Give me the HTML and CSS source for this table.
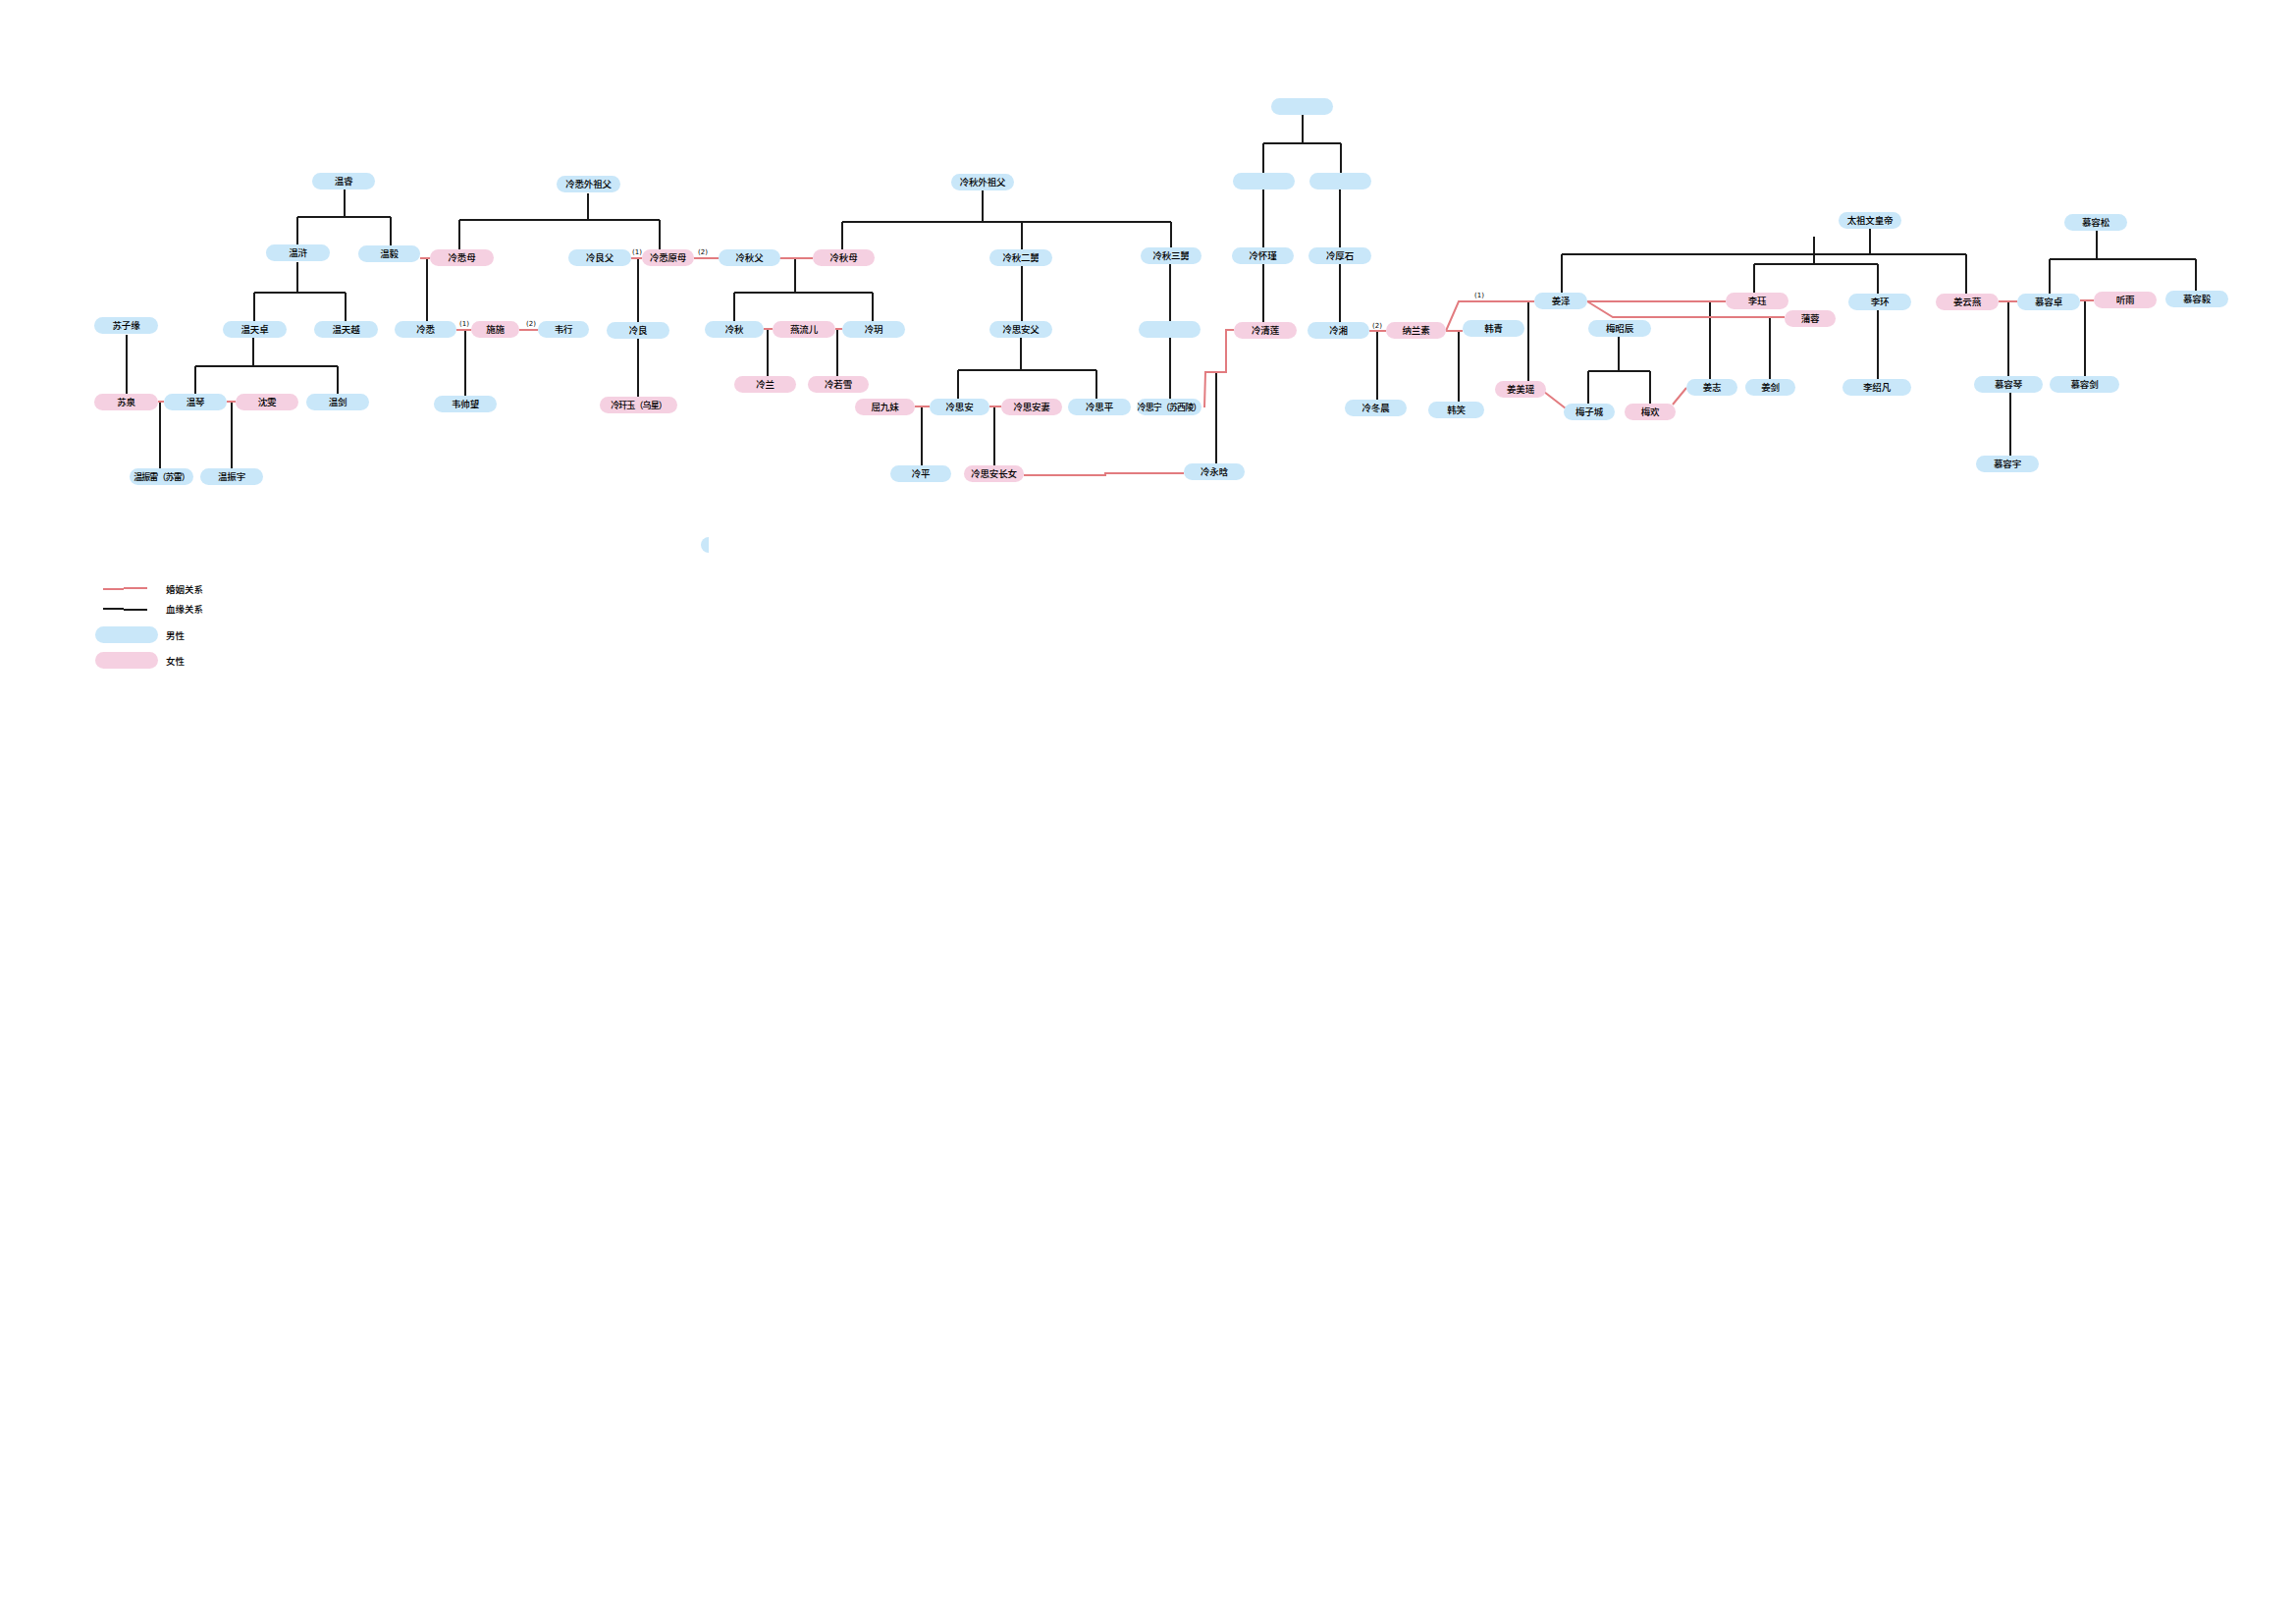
FILE: index.html
```html
<!DOCTYPE html>
<html lang="zh">
<head>
<meta charset="utf-8">
<title>人物关系图</title>
<link rel="stylesheet" href="styles.css">
</head>
<body>
<div class="canvas">
<svg class="links" width="2339" height="1653" viewBox="0 0 2339 1653">
<g class="blood">
<path d="M351 193V221M303 221H398M303 221V249M398 221V250"/>
<path d="M303 267V298M259 298H352M259 298V327M352 298V327"/>
<path d="M258 343V373M199 373H344M199 373V402M344 373V401"/>
<path d="M129 341V402M163 409V477M236 409V477M435 263V327"/>
<path d="M599 197V224M468 224H672M468 224V254M672 224V254"/>
<path d="M650 263V328M650 345V404M474 336V403"/>
<path d="M810 263V298M748 298H889M748 298V327M889 298V327"/>
<path d="M1001 194V226M858 226H1193M858 226V254M1041 226V254M1193 226V252"/>
<path d="M782 335V383M853 335V383M1041 271V327"/>
<path d="M1040 343V377M976 377H1117M976 377V406M1117 377V406"/>
<path d="M939 414V474M1013 414V474M1192 269V327M1192 343V406M1239 379V472"/>
<path d="M1327 117V146M1287 146H1366M1287 146V176M1366 146V176"/>
<path d="M1287 193V252M1287 268V328M1365 193V252M1365 268V328"/>
<path d="M1403 337V407M1557 307V388M1486 337V409"/>
<path d="M1649 343V378M1618 378H1681M1618 378V411M1681 378V411"/>
<path d="M1742 307V386M1803 323V386"/>
<path d="M1591 259H2003M1591 259V298M2003 259V299M1787 269H1913M1787 269V298M1913 269V299M1848 241V269M1905 233V259"/>
<path d="M1913 316V386M2046 307V383M2124 306V383"/>
<path d="M2136 234V264M2088 264H2237M2088 264V299M2237 264V296M2048 400V464"/>
<path d="M105 620H126M126 621H150"/>
</g>
<g class="marriage">
<path d="M161 409H167M231 409H240M428 263H438"/>
<path d="M643 263H654M707 263H732M465 336H480M529 336H548"/>
<path d="M794 263H828M778 335H787M851 335H858"/>
<path d="M932 414H947M1008 414H1020"/>
<path d="M1043 484H1126V482H1206"/>
<path d="M1227 415L1228 379H1249V336H1257"/>
<path d="M1395 337H1412M1473 337L1486 307H1563M1473 337H1490"/>
<path d="M1573 399L1595 416M1704 412L1718 395"/>
<path d="M1617 307H1758M1617 307L1643 323H1818"/>
<path d="M2036 307H2055M2119 306H2133"/>
<path d="M105 600H126M126 599H150"/>
</g>
<g class="tag">
<text x="649" y="259">(1)</text>
<text x="716" y="259">(2)</text>
<text x="473" y="332">(1)</text>
<text x="541" y="332">(2)</text>
<text x="1403" y="334">(2)</text>
<text x="1507" y="303">(1)</text>
</g>
</svg>

<div class="node m" style="left:318px;top:176px;width:64px">温睿</div>
<div class="node m" style="left:271px;top:249px;width:65px">温浒</div>
<div class="node m" style="left:365px;top:250px;width:63px">温毅</div>
<div class="node f" style="left:438px;top:254px;width:65px">冷悉母</div>
<div class="node m" style="left:227px;top:327px;width:65px">温天卓</div>
<div class="node m" style="left:320px;top:327px;width:65px">温天越</div>
<div class="node m" style="left:96px;top:323px;width:65px">苏子缘</div>
<div class="node m" style="left:402px;top:327px;width:63px">冷悉</div>
<div class="node f" style="left:96px;top:401px;width:65px">苏泉</div>
<div class="node m" style="left:167px;top:401px;width:64px">温琴</div>
<div class="node f" style="left:240px;top:401px;width:64px">沈雯</div>
<div class="node m" style="left:312px;top:401px;width:64px">温剑</div>
<div class="node m tight" style="left:132px;top:477px;width:65px">温振雷（苏雷）</div>
<div class="node m" style="left:204px;top:477px;width:64px">温振宇</div>

<div class="node m" style="left:567px;top:179px;width:65px">冷悉外祖父</div>
<div class="node m" style="left:579px;top:254px;width:64px">冷良父</div>
<div class="node f" style="left:654px;top:254px;width:53px">冷悉原母</div>
<div class="node m" style="left:732px;top:254px;width:63px">冷秋父</div>
<div class="node f" style="left:480px;top:327px;width:49px">施施</div>
<div class="node m" style="left:548px;top:327px;width:52px">韦行</div>
<div class="node m" style="left:442px;top:403px;width:64px">韦帅望</div>
<div class="node m" style="left:618px;top:328px;width:64px">冷良</div>
<div class="node f tight" style="left:611px;top:404px;width:79px">冷玕玉（乌星）</div>
<div class="node m" style="left:718px;top:327px;width:60px">冷秋</div>

<div class="node m" style="left:969px;top:177px;width:64px">冷秋外祖父</div>
<div class="node f" style="left:828px;top:254px;width:63px">冷秋母</div>
<div class="node f" style="left:787px;top:327px;width:64px">燕流儿</div>
<div class="node m" style="left:858px;top:327px;width:64px">冷玥</div>
<div class="node m" style="left:1008px;top:254px;width:64px">冷秋二舅</div>
<div class="node m" style="left:1008px;top:327px;width:64px">冷思安父</div>
<div class="node f" style="left:748px;top:383px;width:63px">冷兰</div>
<div class="node f" style="left:823px;top:383px;width:62px">冷若雪</div>
<div class="node f" style="left:871px;top:406px;width:61px">屈九妹</div>
<div class="node m" style="left:947px;top:406px;width:61px">冷思安</div>
<div class="node f" style="left:1020px;top:406px;width:62px">冷思安妻</div>
<div class="node m" style="left:907px;top:474px;width:62px">冷平</div>
<div class="node f" style="left:982px;top:474px;width:61px">冷思安长女</div>

<div class="node m" style="left:1162px;top:252px;width:62px">冷秋三舅</div>
<div class="node m" style="left:1088px;top:406px;width:64px">冷思平</div>
<div class="node m" style="left:1160px;top:327px;width:63px"></div>
<div class="node m tight" style="left:1158px;top:406px;width:66px">冷思宁（苏西陵）</div>
<div class="node m" style="left:1206px;top:472px;width:62px">冷永晗</div>

<div class="node m" style="left:1295px;top:100px;width:63px"></div>
<div class="node m" style="left:1256px;top:176px;width:63px"></div>
<div class="node m" style="left:1334px;top:176px;width:63px"></div>
<div class="node m" style="left:1255px;top:252px;width:63px">冷怀瑾</div>
<div class="node m" style="left:1333px;top:252px;width:64px">冷厚石</div>
<div class="node f" style="left:1257px;top:328px;width:64px">冷清莲</div>
<div class="node m" style="left:1332px;top:328px;width:63px">冷湘</div>
<div class="node f" style="left:1412px;top:328px;width:61px">纳兰素</div>
<div class="node m" style="left:1370px;top:407px;width:63px">冷冬晨</div>

<div class="node m" style="left:1490px;top:326px;width:63px">韩青</div>
<div class="node m" style="left:1455px;top:409px;width:57px">韩笑</div>
<div class="node f" style="left:1523px;top:388px;width:52px">姜美瑶</div>
<div class="node m" style="left:1563px;top:298px;width:54px">姜泽</div>
<div class="node m" style="left:1618px;top:326px;width:64px">梅昭辰</div>
<div class="node m" style="left:1593px;top:411px;width:52px">梅子城</div>
<div class="node f" style="left:1655px;top:411px;width:52px">梅欢</div>
<div class="node m" style="left:1718px;top:386px;width:52px">姜志</div>
<div class="node m" style="left:1778px;top:386px;width:51px">姜剑</div>
<div class="node f" style="left:1758px;top:298px;width:64px">李珏</div>
<div class="node f" style="left:1818px;top:316px;width:52px">蒲蓉</div>

<div class="node m" style="left:1873px;top:216px;width:64px">太祖文皇帝</div>
<div class="node m" style="left:1883px;top:299px;width:64px">李环</div>
<div class="node m" style="left:1877px;top:386px;width:70px">李绍凡</div>
<div class="node f" style="left:1972px;top:299px;width:64px">姜云燕</div>
<div class="node m" style="left:2055px;top:299px;width:64px">慕容卓</div>
<div class="node f" style="left:2133px;top:297px;width:64px">听雨</div>
<div class="node m" style="left:2206px;top:296px;width:64px">慕容毅</div>
<div class="node m" style="left:2103px;top:218px;width:64px">慕容松</div>
<div class="node m" style="left:2011px;top:383px;width:70px">慕容琴</div>
<div class="node m" style="left:2088px;top:383px;width:71px">慕容剑</div>
<div class="node m" style="left:2013px;top:464px;width:64px">慕容宇</div>

<div class="sliver" style="left:714px;top:547px"></div>

<div class="legend">
  <div class="legend-row"><span class="legend-key"></span><span>婚姻关系</span></div>
  <div class="legend-row"><span class="legend-key"></span><span>血缘关系</span></div>
  <div class="legend-row pill-row"><span class="legend-pill m"></span><span>男性</span></div>
  <div class="legend-row pill-row"><span class="legend-pill f"></span><span>女性</span></div>
</div>
</div>
</body>
</html>
```
FILE: styles.css
```css
html, body {
  margin: 0;
  padding: 0;
  background: #ffffff;
}
.canvas {
  position: relative;
  width: 2339px;
  height: 1653px;
  overflow: hidden;
  font-family: "Noto Sans CJK SC", "Noto Sans", sans-serif;
  color: #000;
}
.links {
  position: absolute;
  left: 0;
  top: 0;
}
.blood path {
  fill: none;
  stroke: #1a1a1a;
  stroke-width: 2;
}
.marriage path {
  fill: none;
  stroke: #e27b7f;
  stroke-width: 2;
}
.tag text {
  font-family: "DejaVu Sans", sans-serif;
  font-size: 7px;
  text-anchor: middle;
  fill: #000;
}
.node {
  position: absolute;
  height: 17px;
  border-radius: 9px;
  font-size: 9.5px;
  font-weight: 500;
  line-height: 17px;
  text-align: center;
  white-space: nowrap;
  overflow: visible;
  letter-spacing: -0.2px;
}
.node.tight {
  font-size: 9px;
  letter-spacing: -0.9px;
}
.node.m {
  background: #c9e7f9;
}
.node.f {
  background: #f5d0e1;
}
.sliver {
  position: absolute;
  width: 8px;
  height: 16px;
  background: #c9e7f9;
  border-radius: 8px 0 0 8px;
}
.legend {
  position: absolute;
  left: 97px;
  top: 590px;
  display: flex;
  flex-direction: column;
  font-size: 9.5px;
  font-weight: 500;
}
.legend-row {
  display: flex;
  align-items: center;
  gap: 8px;
  height: 20px;
}
.legend-key {
  width: 64px;
}
.legend-row.pill-row {
  height: 17px;
  margin-top: 8px;
}
.legend-row.pill-row + .legend-row.pill-row {
  margin-top: 9px;
}
.legend-pill {
  width: 64px;
  height: 17px;
  border-radius: 9px;
}
.legend-pill.m {
  background: #c9e7f9;
}
.legend-pill.f {
  background: #f5d0e1;
}
```
